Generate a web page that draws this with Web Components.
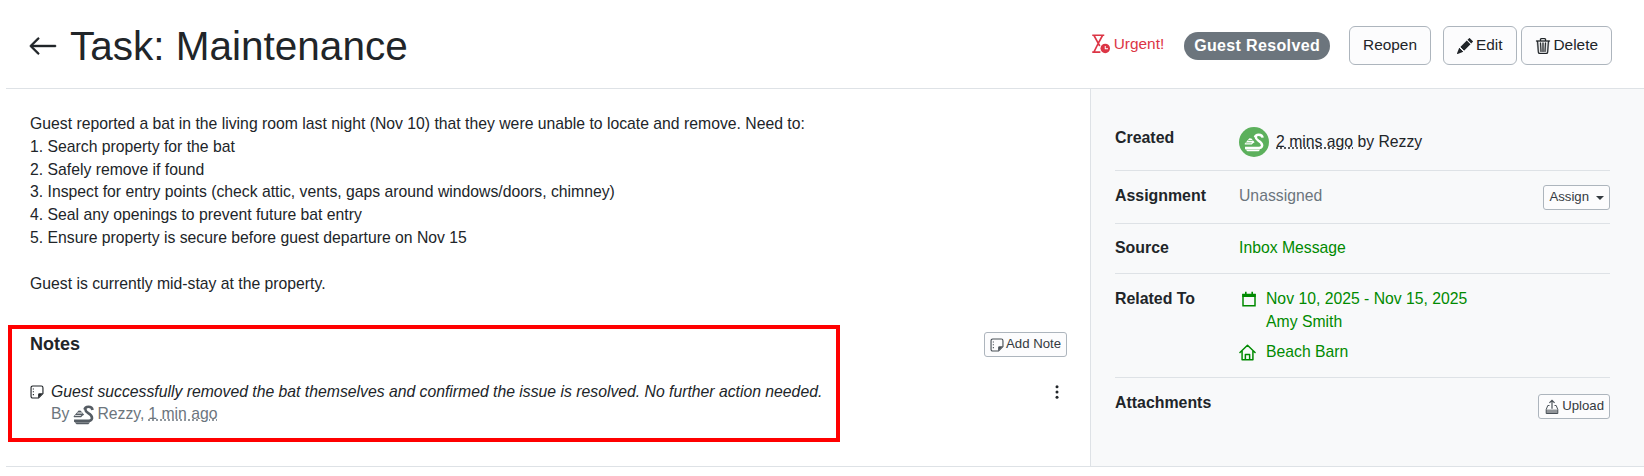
<!DOCTYPE html>
<html>
<head>
<meta charset="utf-8">
<title>Task: Maintenance</title>
<style>
    html, body { margin: 0; padding: 0; background: #fff; }
    body { font: 15.76px/22.8px "Liberation Sans", Arial, sans-serif; color: #212529; overflow: hidden; }
</style>
</head>
<body>
<task-page></task-page>

<script>
const ICONS = {
    back: `<path stroke="currentColor" stroke-width=".25" fill-rule="evenodd" d="M15 8a.5.5 0 0 0-.5-.5H2.707l3.147-3.146a.5.5 0 1 0-.708-.708l-4 4a.5.5 0 0 0 0 .708l4 4a.5.5 0 0 0 .708-.708L2.707 8.5H14.5A.5.5 0 0 0 15 8z"/>`,
    pencil: `<path d="M12.854.146a.5.5 0 0 0-.707 0L10.5 1.793 14.207 5.5l1.647-1.646a.5.5 0 0 0 0-.708l-3-3zm.646 6.061L9.793 2.5 3.293 9H3.5a.5.5 0 0 1 .5.5v.5h.5a.5.5 0 0 1 .5.5v.5h.5a.5.5 0 0 1 .5.5v.5h.5a.5.5 0 0 1 .5.5v.207l6.5-6.5zm-7.468 7.468A.5.5 0 0 1 6 13.5V13h-.5a.5.5 0 0 1-.5-.5V12h-.5a.5.5 0 0 1-.5-.5V11h-.5a.5.5 0 0 1-.5-.5V10h-.5a.499.499 0 0 1-.175-.032l-.179.178a.5.5 0 0 0-.11.168l-2 5a.5.5 0 0 0 .65.65l5-2a.5.5 0 0 0 .168-.11l.178-.178z"/>`,
    trash: `<path stroke="currentColor" stroke-width=".35" d="M6.5 1h3a.5.5 0 0 1 .5.5v1H6v-1a.5.5 0 0 1 .5-.5ZM11 2.5v-1A1.5 1.5 0 0 0 9.5 0h-3A1.5 1.5 0 0 0 5 1.500v1H2.506a.58.58 0 0 0-.01 0H1.5a.5.5 0 0 0 0 1h.538l.853 10.660A2 2 0 0 0 4.885 16h6.230a2 2 0 0 0 1.994-1.840l.853-10.660h.538a.5.5 0 0 0 0-1h-.995a.59.59 0 0 0-.01 0H11Zm1.958 1-.846 10.580a1 1 0 0 1-.997.920h-6.230a1 1 0 0 1-.997-.920L3.042 3.500h9.916Zm-7.487 1a.5.5 0 0 1 .528.470l.5 8.500a.5.5 0 0 1-.998.060L5 5.030a.5.5 0 0 1 .470-.530Zm5.058 0a.5.5 0 0 1 .470.530l-.5 8.500a.5.5 0 1 1-.998-.060l.5-8.500a.5.5 0 0 1 .528-.470ZM8 4.500a.5.5 0 0 1 .5.5v8.500a.5.5 0 0 1-1 0V5a.5.5 0 0 1 .5-.5Z"/>`,
    hourglass: `<path fill="none" stroke="currentColor" stroke-width="1.300" d="M1 1h9.600M2.300 1 5.800 7.400 2.300 14.500M9.300 1 5.800 7.400 7 9.600M1 14.500h6.500"/><circle cx="11.400" cy="11.500" r="3.800"/><path d="M11 9.500h.8v1.800h1.800v.8H11z" fill="#fff"/>`,
    note: `<path fill="none" stroke="currentColor" stroke-width="1.300" d="M3 1.200h10A1.800 1.800 0 0 1 14.800 3v6.800L9.800 14.800H3A1.800 1.800 0 0 1 1.200 13V3A1.800 1.800 0 0 1 3 1.200z"/><path d="M9.300 14.500V10.800a1.500 1.500 0 0 1 1.500-1.500h3.800z"/><path d="M3.200 4h1.300v1.200H3.200zM3.200 7.200h1.300v1.200H3.200zM3.200 10.400h1.300v1.200H3.200z"/>`,
    calendar: `<path fill="none" stroke="currentColor" stroke-width="1.500" d="M2 3.500h12v11.200H2z"/><path d="M1.300 3h13.400v3H1.300zM4 .8h1.600V3H4zM10.400.8H12V3h-1.600z"/>`,
    house: `<path fill="none" stroke="currentColor" stroke-width="1.400" stroke-linejoin="round" stroke-linecap="round" d="M.9 8 8 1.200 15.100 8M2.900 6.600v8.200h10.200V6.600M6 14.800V9.800h4v5"/>`,
    upload: `<path d="M8 .6 11 3.600l-.8.7L8.600 2.700v7H7.400v-7L5.800 4.300 5 3.600z"/><path fill="none" stroke="currentColor" d="M5.500 6.500H3.800L2.200 10.500v4h11.600v-4L12.200 6.500h-1.700"/><path d="M2.200 10.500h11.600v4H2.200z" opacity=".6"/>`,
    dots: `<circle cx="8" cy="2.700" r="1.500"/><circle cx="8" cy="8" r="1.500"/><circle cx="8" cy="13.300" r="1.500"/>`,
    swan: `<path d="M.4 9.600 4.300 5l1.600.2L8.500 8.200c-1 .4-1.800 1-2.300 1.800H.8z"/><path d="M3.600 6.500h3l.7.7H3zM1.800 8.400h4.600l-.6.600H1.300z" fill="var(--swan-gap, #fff)"/><path fill="none" stroke="currentColor" stroke-width="2" d="M8.800 4.200c.5-2.700 5.500-2.900 6.100.3M9.700 2.800c-1 2 .4 3.200 1.900 4.200 1.800 1.100 3.300 2.200 2.800 4.200-.3 1.300-1.500 1.600-2.600 1.600H.8"/><path d="M1.200 13.900h11.800l-1.300 1.500H2.700z"/>`
};

class AppIcon extends HTMLElement {
    connectedCallback() {
        if (this.shadowRoot) return;
        const size = this.getAttribute("size") || 16;
        this.attachShadow({ mode: "open" });
        this.shadowRoot.innerHTML = `
            <style>
            :host { display: inline-flex; flex: none; width: ${size}px; height: ${size}px; }
            svg { display: block; width: 100%; height: 100%; fill: currentColor; }
            </style>
            <svg viewBox="0 0 16 16">${ICONS[this.getAttribute("name")]}</svg>
        `;
    }
}
customElements.define("app-icon", AppIcon);

class AppButton extends HTMLElement {
    constructor() {
        super();
        this.attachShadow({ mode: "open" });
        this.shadowRoot.innerHTML = `
            <style>
            :host { display: inline-flex; flex: none; }
            .btn {
                display: flex; align-items: center; justify-content: center; gap: 3px;
                box-sizing: border-box; height: 39px; padding: 0 13px;
                background: #fcfcfd; border: 1px solid #adb5bd; border-radius: 6px;
                color: #212529; font-size: 15.4px; white-space: nowrap;
            }
            :host([small]) .btn { height: 25px; padding: 0 5px; border-radius: 3px; font-size: 13.2px; color: #343a40; gap: 2px; }
            </style>
            <div class="btn"><slot></slot></div>
        `;
    }
}
customElements.define("app-button", AppButton);

class TaskHeader extends HTMLElement {
    constructor() {
        super();
        this.attachShadow({ mode: "open" });
        this.shadowRoot.innerHTML = `
            <style>
            :host { display: flex; align-items: center; box-sizing: border-box; height: 89px; padding: 3px 32px 0 22px; border-bottom: 1px solid #dee2e6; }
            h1 { margin: 0 0 0 12px; font-size: 40.5px; line-height: 48px; font-weight: 400; color: #212529; }
            .right { margin-left: auto; display: flex; align-items: center; }
            .urgent { display: flex; align-items: center; gap: 3px; color: #dc3545; font-size: 15.4px; margin-right: 20px; padding-bottom: 2px; }
            .badge { background: #6c757d; color: #fff; font-weight: 700; font-size: 16px; letter-spacing: .35px; line-height: 28px; height: 28px; padding: 0 10px; border-radius: 14px; margin-right: 19px; }
            .gap { margin-right: 12px; }
            .tight { margin-right: 4px; }
            </style>
            <app-icon name="back" size="30"></app-icon>
            <h1>Task: Maintenance</h1>
            <div class="right">
                <span class="urgent"><app-icon name="hourglass" size="20"></app-icon>Urgent!</span>
                <span class="badge">Guest Resolved</span>
                <app-button class="gap">Reopen</app-button>
                <app-button class="tight"><app-icon name="pencil" size="16"></app-icon>Edit</app-button>
                <app-button><app-icon name="trash" size="16"></app-icon>Delete</app-button>
            </div>
        `;
    }
}
customElements.define("task-header", TaskHeader);

class NoteItem extends HTMLElement {
    constructor() {
        super();
        this.attachShadow({ mode: "open" });
        this.shadowRoot.innerHTML = `
            <style>
            :host { display: flex; align-items: flex-start; }
            .mark { width: 14px; height: 14px; margin: 4px 7px 0 0; color: #212529; }
            .body { flex: 1; }
            em { display: block; font-style: italic; color: #212529; }
            .by { color: #6c757d; display: flex; align-items: center; margin-top: -1px; }
            .by app-icon { margin: 0 3px 0 4px; color: #555c63; }
            abbr { text-decoration: underline dotted; text-underline-offset: 1px; margin-left: 4px; }
            .more { width: 16px; height: 16px; margin: 3px 2px 0 0; color: #212529; }
            </style>
            <app-icon class="mark" name="note" size="14"></app-icon>
            <div class="body">
                <em><slot></slot></em>
                <div class="by">By<app-icon name="swan" size="21"></app-icon>Rezzy,<abbr>1 min ago</abbr></div>
            </div>
            <app-icon class="more" name="dots" size="16"></app-icon>
        `;
    }
}
customElements.define("note-item", NoteItem);

class TaskNotes extends HTMLElement {
    constructor() {
        super();
        this.attachShadow({ mode: "open" });
        this.shadowRoot.innerHTML = `
            <style>
            :host { display: block; margin-top: 37px; }
            .head { display: flex; align-items: flex-start; justify-content: space-between; margin-bottom: 24px; }
            h2 { margin: 0; font-size: 18px; line-height: 25px; font-weight: 700; color: #212529; }
            app-icon { color: #495057; }
            </style>
            <div class="head">
                <h2>Notes</h2>
                <app-button small><app-icon name="note" size="14"></app-icon>Add Note</app-button>
            </div>
            <slot></slot>
        `;
    }
}
customElements.define("task-notes", TaskNotes);

class SideRow extends HTMLElement {
    constructor() {
        super();
        this.attachShadow({ mode: "open" });
        this.shadowRoot.innerHTML = `
            <style>
            :host { display: flex; align-items: flex-start; padding: 14px 0 13px; border-bottom: 1px solid #dee2e6; }
            :host([last]) { border-bottom: 0; }
            :host([tight]) { padding-top: 13px; }
            .label { flex: none; width: 124px; font-weight: 700; font-size: 15.9px; color: #212529; }
            .value { flex: 1; min-width: 0; }
            </style>
            <div class="label"><slot name="label"></slot></div>
            <div class="value"><slot></slot></div>
        `;
    }
}
customElements.define("side-row", SideRow);

class TaskSidebar extends HTMLElement {
    constructor() {
        super();
        this.attachShadow({ mode: "open" });
        this.shadowRoot.innerHTML = `
            <style>
            :host { display: block; box-sizing: border-box; background: #f8f9fa; border-left: 1px solid #dee2e6; padding: 24px 34px 0 24px; color: #212529; }
            .created { display: flex; align-items: center; gap: 7px; }
            .avatar { width: 30px; height: 30px; border-radius: 50%; background: #5cb05c; color: #fff; display: flex; align-items: center; justify-content: center; flex: none; --swan-gap: #5cb05c; }
            abbr { text-decoration: underline dotted; text-underline-offset: 1px; }
            .muted { color: #6c757d; }
            .split { display: flex; justify-content: space-between; align-items: flex-start; }
            .link { color: #008a00; }
            .rel { display: flex; color: #008a00; }
            .rel app-icon { margin: 3px 10px 0 0; }
            .rel app-icon[name=calendar] { margin: 3px 9px 0 2px; }
            .rel + .rel { margin-top: 8px; }
            .caret { display: inline-block; margin-left: 5px; border: 4px solid transparent; border-top-color: #343a40; border-bottom: 0; vertical-align: 2px; }
            .upload { color: #495057; }
            .attach { margin-top: 2px; }
            </style>
            <side-row>
                <span slot="label">Created</span>
                <div class="created"><span class="avatar"><app-icon name="swan" size="20"></app-icon></span><span><abbr>2 mins ago</abbr> by Rezzy</span></div>
            </side-row>
            <side-row>
                <span slot="label">Assignment</span>
                <div class="split"><span class="muted">Unassigned</span><app-button small>Assign<span class="caret"></span></app-button></div>
            </side-row>
            <side-row tight>
                <span slot="label">Source</span>
                <span class="link">Inbox Message</span>
            </side-row>
            <side-row>
                <span slot="label">Related To</span>
                <div class="rel"><app-icon name="calendar" size="16"></app-icon><div>Nov 10, 2025 - Nov 15, 2025<br>Amy Smith</div></div>
                <div class="rel"><app-icon name="house" size="17"></app-icon><div>Beach Barn</div></div>
            </side-row>
            <side-row last>
                <span slot="label">Attachments</span>
                <div class="split attach"><span></span><app-button small><app-icon class="upload" name="upload" size="16"></app-icon>Upload</app-button></div>
            </side-row>
        `;
    }
}
customElements.define("task-sidebar", TaskSidebar);

class TaskPage extends HTMLElement {
    constructor() {
        super();
        this.attachShadow({ mode: "open" });
        this.shadowRoot.innerHTML = `
            <style>
            :host { display: block; position: relative; margin-left: 6px; height: 476px; }
            .columns { display: grid; grid-template-columns: 1084px 1fr; height: 377px; border-bottom: 1px solid #dee2e6; }
            main { padding: 24px 23px 0 24px; }
            .desc { white-space: pre-line; }
            .mark { position: absolute; left: 2px; top: 325px; width: 832px; height: 117px; box-sizing: border-box; border: 4px solid #ff0000; pointer-events: none; }
            </style>
            <task-header></task-header>
            <div class="columns">
                <main>
                    <div class="desc">Guest reported a bat in the living room last night (Nov 10) that they were unable to locate and remove. Need to:
1. Search property for the bat
2. Safely remove if found
3. Inspect for entry points (check attic, vents, gaps around windows/doors, chimney)
4. Seal any openings to prevent future bat entry
5. Ensure property is secure before guest departure on Nov 15

Guest is currently mid-stay at the property.</div>
                    <task-notes>
                        <note-item>Guest successfully removed the bat themselves and confirmed the issue is resolved. No further action needed.</note-item>
                    </task-notes>
                </main>
                <task-sidebar></task-sidebar>
            </div>
            <div class="mark"></div>
        `;
    }
}
customElements.define("task-page", TaskPage);
</script>
</body>
</html>
